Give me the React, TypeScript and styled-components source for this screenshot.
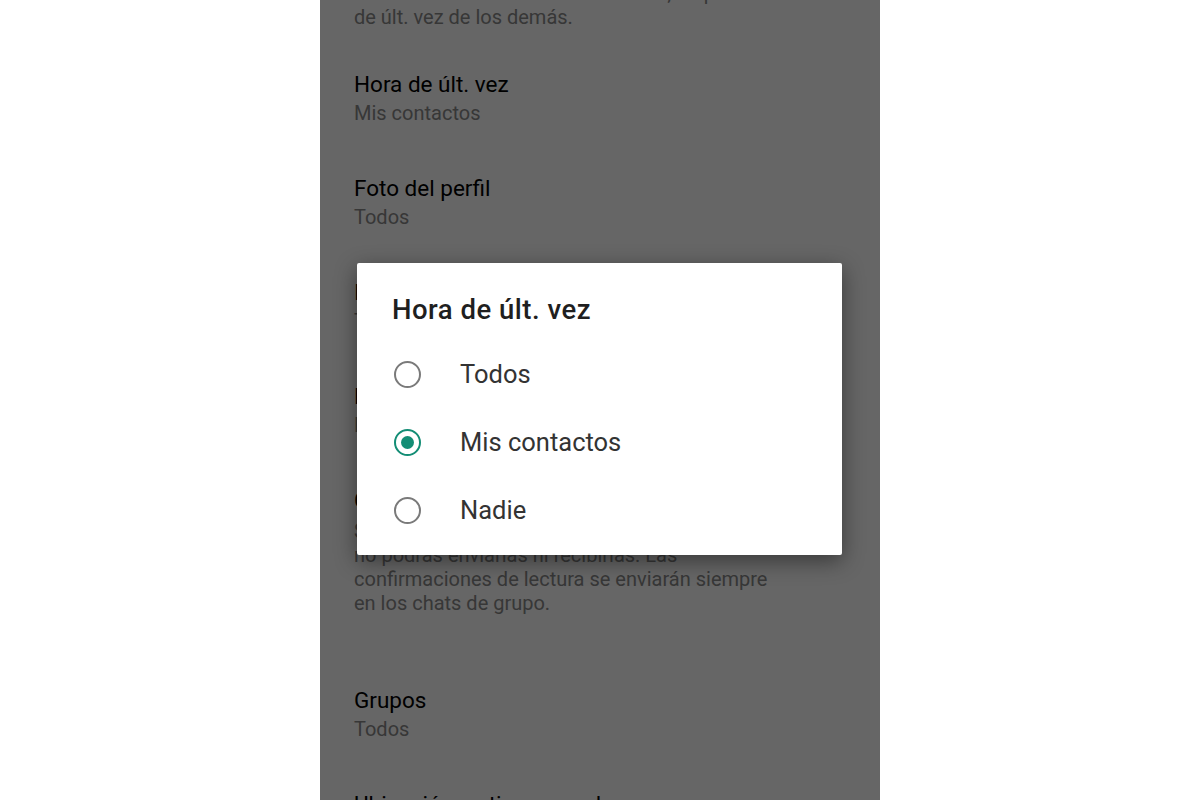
import React, { useState } from "react";
import styled, { createGlobalStyle } from "styled-components";

const GlobalStyle = createGlobalStyle`
  html, body {
    margin: 0;
    padding: 0;
    background: #ffffff;
    font-family: Roboto, "Noto Sans", "Liberation Sans", sans-serif;
  }
`;

const Phone = styled.div`
  position: relative;
  width: 560px;
  height: 800px;
  margin: 0 auto;
  background: #ffffff;
  overflow: hidden;
`;

const List = styled.div`
  padding: 0 40px 0 34px;
`;

const Note = styled.p`
  margin: -19px 0 16px;
  font-size: 20px;
  line-height: 24px;
  color: #8a8a8a;
  white-space: nowrap;
`;

const Item = styled.div<{ $gap?: number }>`
  display: flex;
  align-items: flex-start;
  padding: 23px 0;
  margin-top: ${(p) => p.$gap ?? 0}px;
`;

const ItemText = styled.div`
  flex: 1;
`;

const Title = styled.div`
  font-size: 22.5px;
  line-height: 32px;
  color: #000000;
`;

const Sub = styled.div`
  font-size: 20px;
  line-height: 26px;
  color: #8a8a8a;
`;

const Desc = styled.div`
  margin-top: 3px;
  font-size: 20px;
  line-height: 24px;
  color: #8a8a8a;
  white-space: nowrap;
`;

const Check = styled.span`
  width: 22px;
  height: 22px;
  margin-top: 6px;
  border-radius: 2px;
  background: #128c7e;
`;

const Scrim = styled.div`
  position: absolute;
  inset: 0;
  background: rgba(0, 0, 0, 0.6);
`;

const Dialog = styled.div`
  position: absolute;
  left: 37px;
  top: 263px;
  width: 485px;
  height: 292px;
  box-sizing: border-box;
  padding: 31px 0 11px;
  background: #ffffff;
  border-radius: 2px;
  box-shadow: 0 6px 22px rgba(0, 0, 0, 0.45);
`;

const DialogTitle = styled.h2`
  margin: 0 0 14px 35px;
  font-size: 27.5px;
  line-height: 32px;
  font-weight: 500;
  letter-spacing: 0.5px;
  color: #1f1f1f;
`;

const Option = styled.label`
  display: flex;
  align-items: center;
  height: 68px;
  padding-left: 37px;
  cursor: pointer;
`;

const Radio = styled.span<{ $on: boolean }>`
  position: relative;
  width: 27px;
  height: 27px;
  box-sizing: border-box;
  border-radius: 50%;
  border: 2.5px solid ${(p) => (p.$on ? "#138d75" : "#7a7a7a")};
  flex-shrink: 0;

  &::after {
    content: "";
    display: ${(p) => (p.$on ? "block" : "none")};
    position: absolute;
    left: 50%;
    top: 50%;
    width: 13px;
    height: 13px;
    margin: -6.5px 0 0 -6.5px;
    border-radius: 50%;
    background: #138d75;
  }
`;

const OptionText = styled.span`
  margin-left: 39px;
  font-size: 25.5px;
  color: #333333;
`;

const settings = [
  { title: "Hora de últ. vez", value: "Mis contactos" },
  { title: "Foto del perfil", value: "Todos" },
  { title: "Info.", value: "Todos" },
  { title: "Estado", value: "Mis contactos" },
];

const choices = ["Todos", "Mis contactos", "Nadie"];

export default function App() {
  const [selected, setSelected] = useState("Mis contactos");

  return (
    <>
      <GlobalStyle />
      <Phone>
        <List>
          <Note>
            Si no muestras la hora de la últ. vez, no podrás ver la hora
            <br />
            de últ. vez de los demás.
          </Note>
          {settings.map((s) => (
            <Item key={s.title}>
              <ItemText>
                <Title>{s.title}</Title>
                <Sub>{s.value}</Sub>
              </ItemText>
            </Item>
          ))}
          <Item>
            <ItemText>
              <Title>Confirmaciones de lectura</Title>
              <Desc>
                Si desactivas las confirmaciones de lectura,
                <br />
                no podrás enviarlas ni recibirlas. Las
                <br />
                confirmaciones de lectura se enviarán siempre
                <br />
                en los chats de grupo.
              </Desc>
            </ItemText>
            <Check />
          </Item>
          <Item $gap={23}>
            <ItemText>
              <Title>Grupos</Title>
              <Sub>Todos</Sub>
            </ItemText>
          </Item>
          <Item>
            <ItemText>
              <Title>Ubicación en tiempo real</Title>
              <Sub>Ninguna</Sub>
            </ItemText>
          </Item>
        </List>
        <Scrim />
        <Dialog>
          <DialogTitle>Hora de últ. vez</DialogTitle>
          {choices.map((c) => (
            <Option key={c} onClick={() => setSelected(c)}>
              <Radio $on={selected === c} />
              <OptionText>{c}</OptionText>
            </Option>
          ))}
        </Dialog>
      </Phone>
    </>
  );
}
